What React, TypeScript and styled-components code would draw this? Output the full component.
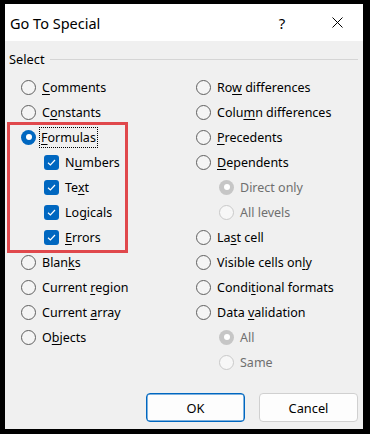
import React from "react";
import styled, { createGlobalStyle, css } from "styled-components";

const Global = createGlobalStyle`
  html, body { margin: 0; padding: 0; background: #000; }
  body { width: 370px; height: 434px; overflow: hidden; }
  * { box-sizing: border-box; }
`;

const FONT = `"Noto Sans", "Open Sans", "Liberation Sans", sans-serif`;

const Dialog = styled.div`
  margin: 4px 7px 0 5px;
  width: 358px;
  height: 425px;
  background: #f0f0f0;
  display: flex;
  flex-direction: column;
  font-family: ${FONT};
  color: #000;
`;

const TitleBar = styled.div`
  height: 37px;
  background: #fff;
  display: flex;
  align-items: center;
  padding-left: 5px;
`;

const Title = styled.div`
  flex: 1;
  font-size: 14.5px;
  padding-top: 1px;
`;

const TitleButton = styled.div<{ $w: number }>`
  width: ${(p) => p.$w}px;
  height: 37px;
  display: flex;
  align-items: center;
  justify-content: center;
  font-size: 15px;
`;

const Body = styled.div`
  flex: 1;
  display: flex;
  flex-direction: column;
  padding: 9px 5px 7px 4px;
`;

const GroupHeader = styled.div`
  display: flex;
  align-items: center;
  gap: 5px;
  height: 18px;
  font-size: 12.8px;
`;

const Rule = styled.div`
  flex: 1;
  height: 1px;
  background: #d5d5d5;
`;

const Columns = styled.div`
  margin-top: 6.5px;
  padding-left: 12px;
  display: grid;
  grid-template-columns: 175px 1fr;
`;

const Col = styled.div`
  display: flex;
  flex-direction: column;
`;

const Row = styled.div<{ $indent?: boolean; $disabled?: boolean }>`
  height: 25px;
  display: flex;
  align-items: center;
  gap: 6px;
  padding-left: ${(p) => (p.$indent ? 23 : 0)}px;
  font-size: 12.5px;
  color: ${(p) => (p.$disabled ? "#6f6f6f" : "#000")};
  white-space: nowrap;
`;

const Label = styled.span<{ $focus?: boolean }>`
  ${(p) =>
    p.$focus &&
    css`
      outline: 1px dotted #000;
      outline-offset: 0;
      padding: 0 1px;
      margin-left: -2px;
      line-height: 19px;
    `}
  u { text-decoration-thickness: 1px; text-underline-offset: 2px; }
`;

const RadioDot = styled.span<{ $checked?: boolean; $disabled?: boolean }>`
  flex: none;
  width: 15px;
  height: 15px;
  border-radius: 50%;
  display: inline-flex;
  align-items: center;
  justify-content: center;
  ${(p) =>
    p.$checked
      ? css`
          background: ${p.$disabled ? "#c6c6c6" : "#0067c0"};
        `
      : css`
          background: ${p.$disabled ? "#f7f7f7" : "#f4f4f4"};
          border: 1px solid ${p.$disabled ? "#c9c9c9" : "#5f5f5f"};
        `}
  &::after {
    content: "";
    display: ${(p) => (p.$checked ? "block" : "none")};
    width: 6px;
    height: 6px;
    border-radius: 50%;
    background: #fff;
  }
`;

const CheckBox = styled.span`
  flex: none;
  width: 15px;
  height: 15px;
  border-radius: 3px;
  background: #0067c0;
  display: inline-flex;
  align-items: center;
  justify-content: center;
`;

const Highlight = styled.div`
  border: 3px solid #e0484c;
  margin: -3px 0 -3px -14px;
  width: 121px;
  padding: 0 0 0 11px;
  display: flex;
  flex-direction: column;
`;

const Footer = styled.div`
  margin-top: auto;
  display: flex;
  justify-content: flex-end;
  gap: 14px;
`;

const Button = styled.button<{ $primary?: boolean }>`
  width: 99px;
  height: 29px;
  border-radius: 4px;
  background: #fdfdfd;
  border: 1px solid ${(p) => (p.$primary ? "#0067c0" : "#d0d0d0")};
  ${(p) => p.$primary && css`box-shadow: inset 0 0 0 0.5px #0067c0;`}
  font-family: ${FONT};
  font-size: 12.8px;
  color: #000;
  padding: 0;
`;

const U: React.FC<{ text: string; at: number }> = ({ text, at }) =>
  at < 0 ? (
    <>{text}</>
  ) : (
    <>
      {text.slice(0, at)}
      <u>{text[at]}</u>
      {text.slice(at + 1)}
    </>
  );

type Item = { text: string; at: number; checked?: boolean; disabled?: boolean; indent?: boolean };

const Radio: React.FC<Item & { focus?: boolean }> = ({ text, at, checked, disabled, indent, focus }) => (
  <Row $indent={indent} $disabled={disabled}>
    <RadioDot $checked={checked} $disabled={disabled} />
    <Label $focus={focus}>
      <U text={text} at={at} />
    </Label>
  </Row>
);

const Check: React.FC<{ text: string; at: number }> = ({ text, at }) => (
  <Row $indent>
    <CheckBox>
      <svg width="11" height="11" viewBox="0 0 11 11">
        <path d="M2 5.8 L4.4 8 L9 3" fill="none" stroke="#fff" strokeWidth="1.2" />
      </svg>
    </CheckBox>
    <Label>
      <U text={text} at={at} />
    </Label>
  </Row>
);

export default function App() {
  return (
    <>
      <Global />
      <Dialog>
        <TitleBar>
          <Title>Go To Special</Title>
          <TitleButton $w={26}>?</TitleButton>
          <TitleButton $w={26} />
          <TitleButton $w={32}>
            <svg width="11" height="11" viewBox="0 0 11 11">
              <path d="M0.5 0.5 L10.5 10.5 M10.5 0.5 L0.5 10.5" stroke="#000" strokeWidth="1" />
            </svg>
          </TitleButton>
          <TitleButton $w={10} />
        </TitleBar>
        <Body>
          <GroupHeader>
            Select
            <Rule />
          </GroupHeader>
          <Columns>
            <Col>
              <Radio text="Comments" at={0} />
              <Radio text="Constants" at={1} />
              <Highlight>
                <Radio text="Formulas" at={0} checked focus />
                <Check text="Numbers" at={1} />
                <Check text="Text" at={2} />
                <Check text="Logicals" at={2} />
                <Check text="Errors" at={0} />
              </Highlight>
              <Radio text="Blanks" at={4} />
              <Radio text="Current region" at={8} />
              <Radio text="Current array" at={8} />
              <Radio text="Objects" at={1} />
            </Col>
            <Col>
              <Radio text="Row differences" at={2} />
              <Radio text="Column differences" at={4} />
              <Radio text="Precedents" at={0} />
              <Radio text="Dependents" at={0} />
              <Radio text="Direct only" at={-1} indent disabled checked />
              <Radio text="All levels" at={-1} indent disabled />
              <Radio text="Last cell" at={2} />
              <Radio text="Visible cells only" at={16} />
              <Radio text="Conditional formats" at={5} />
              <Radio text="Data validation" at={5} />
              <Radio text="All" at={-1} indent disabled checked />
              <Radio text="Same" at={-1} indent disabled />
            </Col>
          </Columns>
          <Footer>
            <Button $primary>OK</Button>
            <Button>Cancel</Button>
          </Footer>
        </Body>
      </Dialog>
    </>
  );
}
